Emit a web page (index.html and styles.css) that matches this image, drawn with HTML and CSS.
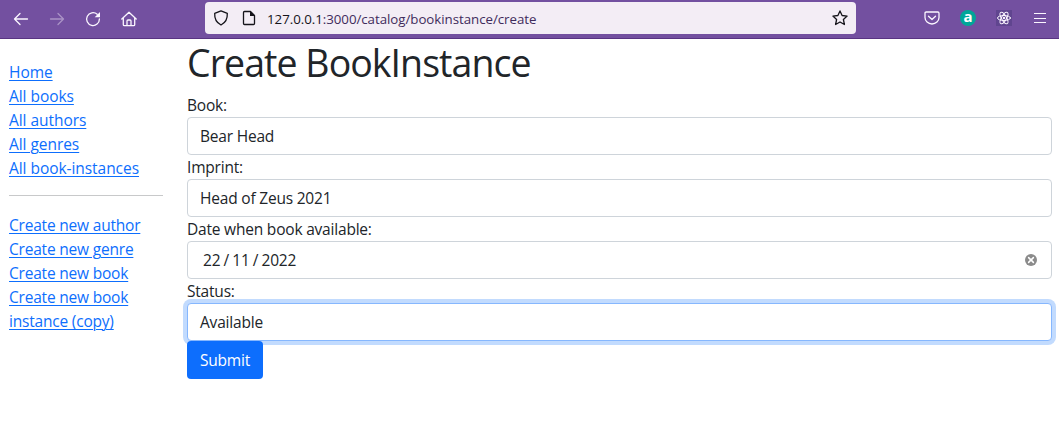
FILE: index.html
```html
<!DOCTYPE html>
<html lang="en">
<head>
<meta charset="utf-8">
<title>Create BookInstance</title>
<link rel="stylesheet" href="styles.css">
</head>
<body>
<header class="toolbar">
  <nav class="history">
    <svg width="16" height="16" viewBox="0 0 16 16"><path d="M14.500 8H1.500M7 2.500L1.500 8 7 13.500"/></svg>
    <svg class="disabled" width="16" height="16" viewBox="0 0 16 16"><path d="M1.500 8h13M9 2.500L14.500 8 9 13.500"/></svg>
    <svg width="16" height="16" viewBox="0 0 16 16"><path d="M12.2 3.3A6.4 6.4 0 1 0 14.4 8"/><path class="solid" d="M15 1v5.2H9.7z"/></svg>
    <svg width="16" height="16" viewBox="0 0 16 16"><path d="M.8 8L8 1.2 15.200 8M2.300 7v6.700q0 1 1 1h9.400q1 0 1-1V7M6 14.500V10q0-1 1-1h2q1 0 1 1v4.500"/></svg>
  </nav>
  <div class="address">
    <svg width="16" height="16" viewBox="0 0 16 16"><path d="M8 .9L14.300 3.300C14.600 8.500 12.500 12.800 8 15 3.500 12.800 1.400 8.500 1.700 3.300z"/></svg>
    <svg class="page" width="16" height="16" viewBox="0 0 16 16"><path d="M3.500 1.500h6l4 4v8q0 1-1 1h-9q-1 0-1-1v-11q0-1 1-1z"/><path class="solid" d="M9 1l5 5H9z"/></svg>
    <span class="url"><span class="host">127.0.0.1</span>:3000/catalog/bookinstance/create</span>
    <svg class="star" width="16" height="16" viewBox="0 0 16 16"><path d="M8 .9l2.100 4.600 5 .6-3.700 3.400 1 5L8 12l-4.400 2.500 1-5L.9 6.100l5-.6z"/></svg>
  </div>
  <div class="extensions">
    <svg width="16" height="16" viewBox="0 0 16 16"><path d="M2.200 2h11.600q1.200 0 1.200 1.200V7.500a7 6.500 0 0 1-14 0V3.200Q1 2 2.200 2zM4.500 6.200L8 9.500l3.500-3.300"/></svg>
    <span class="badge-a">a</span>
    <svg class="react" width="16" height="16" viewBox="0 0 16 16"><ellipse cx="8" cy="8" rx="6.500" ry="2.500"/><ellipse cx="8" cy="8" rx="6.500" ry="2.500" transform="rotate(60 8 8)"/><ellipse cx="8" cy="8" rx="6.500" ry="2.500" transform="rotate(120 8 8)"/><circle class="solid" cx="8" cy="8" r="1.200"/></svg>
    <svg class="menu" width="12" height="16" viewBox="0 0 12 16"><path d="M0 3.500h12M0 8.500h12M0 12.500h12"/></svg>
  </div>
</header>
<div class="layout">
  <aside class="sidebar">
    <ul class="links catalog">
      <li><a href="#">Home</a></li>
      <li><a href="#">All books</a></li>
      <li><a href="#">All authors</a></li>
      <li><a href="#">All genres</a></li>
      <li><a href="#">All book-instances</a></li>
    </ul>
    <hr class="divider">
    <ul class="links">
      <li><a href="#">Create new author</a></li>
      <li><a href="#">Create new genre</a></li>
      <li><a href="#">Create new book</a></li>
      <li><a href="#">Create new book<br>instance (copy)</a></li>
    </ul>
  </aside>
  <main class="content">
    <h1 class="title">Create BookInstance</h1>
    <div class="label">Book:</div>
    <div class="control">Bear Head</div>
    <div class="label">Imprint:</div>
    <div class="control">Head of Zeus 2021</div>
    <div class="label">Date when book available:</div>
    <div class="control date"><span class="date-value">22 / 11 / 2022</span>
      <svg class="clear" width="12" height="12" viewBox="0 0 12 12"><circle cx="6" cy="6" r="6"/><path d="M3.600 3.600l4.800 4.800M8.400 3.600L3.600 8.400"/></svg>
    </div>
    <div class="label">Status:</div>
    <div class="control focused">Available</div>
    <button class="submit">Submit</button>
  </main>
</div>
</body>
</html>
```
FILE: styles.css
```css
* { box-sizing: border-box; }
body {
  margin: 0;
  height: 423px;
  overflow: hidden;
  background: #fff;
  color: #212529;
  font: 15.5px/24px "Open Sans", "Noto Sans", sans-serif;
  letter-spacing: -0.2px;
}
svg { display: block; flex: none; fill: none; stroke: currentColor; stroke-width: 1.3; stroke-linecap: round; stroke-linejoin: round; }
svg .solid { fill: currentColor; stroke: none; }
.toolbar {
  display: flex;
  height: 39px;
  padding-top: 2px;
  background: #7350a0;
  border-bottom: 1px solid #593482;
  color: #fbf6ff;
}
.history { display: flex; gap: 20px; width: 205px; padding: 9px 0 0 13px; }
.disabled { opacity: .4; }
.address {
  display: flex;
  align-items: center;
  width: 651px;
  height: 32px;
  padding: 0 8px;
  background: #f3edf5;
  border-radius: 4px;
  color: #15141a;
}
.page { margin-left: 12px; }
.url { margin: 2px 0 0 10px; color: #3f2b5c; font-size: 13.3px; letter-spacing: -0.04px; white-space: nowrap; }
.host { color: #15141a; }
.star { margin-left: auto; }
.extensions { display: flex; align-items: center; height: 32px; margin-left: 68px; }
.badge-a {
  width: 16px;
  height: 16px;
  margin-left: 20px;
  border-radius: 50%;
  background: #00a698;
  color: #fff;
  font: bold 15px/13px "Open Sans", sans-serif;
  text-align: center;
}
.react { margin-left: 20px; background: #60458f; stroke-width: 1; }
.menu { margin-left: 22px; stroke-linecap: butt; stroke-width: 1.2; }
.layout { display: flex; }
.sidebar { width: 187px; padding: 21px 24px 0 9px; }
.links { margin: 0; padding: 0; list-style: none; }
.links a { color: #0d6efd; text-decoration: underline; text-decoration-thickness: 1px; text-underline-offset: 2px; white-space: nowrap; }
.catalog { letter-spacing: -0.05px; }
.divider { height: 1px; margin: 15px 0 17px; border: 0; background: #c8c9ca; }
.content { width: 865px; }
.title { height: 46px; margin: 0 0 8px; font-size: 37.500px; font-weight: 400; line-height: 48px; letter-spacing: -0.95px; white-space: nowrap; }
.label { height: 24px; }
.control {
  display: flex;
  align-items: center;
  height: 38px;
  padding: 0 12px;
  border: 1px solid #ced4da;
  border-radius: 4px;
  background: #fff;
}
.date { justify-content: space-between; padding: 0 14px 0 15px; }
.date-value { word-spacing: -0.6px; }
.clear { fill: #8b8b8b; stroke: none; }
.clear path { stroke: #fff; stroke-width: 1.5; }
.focused { border-color: #86b7fe; box-shadow: 0 0 0 4px #c2dbfe; }
.submit {
  display: block;
  position: relative;
  width: 76px;
  height: 38px;
  padding: 0;
  border: 0;
  border-radius: 4px;
  background: #0d6efd;
  color: #fff;
  font: inherit;
  letter-spacing: inherit;
}
```
